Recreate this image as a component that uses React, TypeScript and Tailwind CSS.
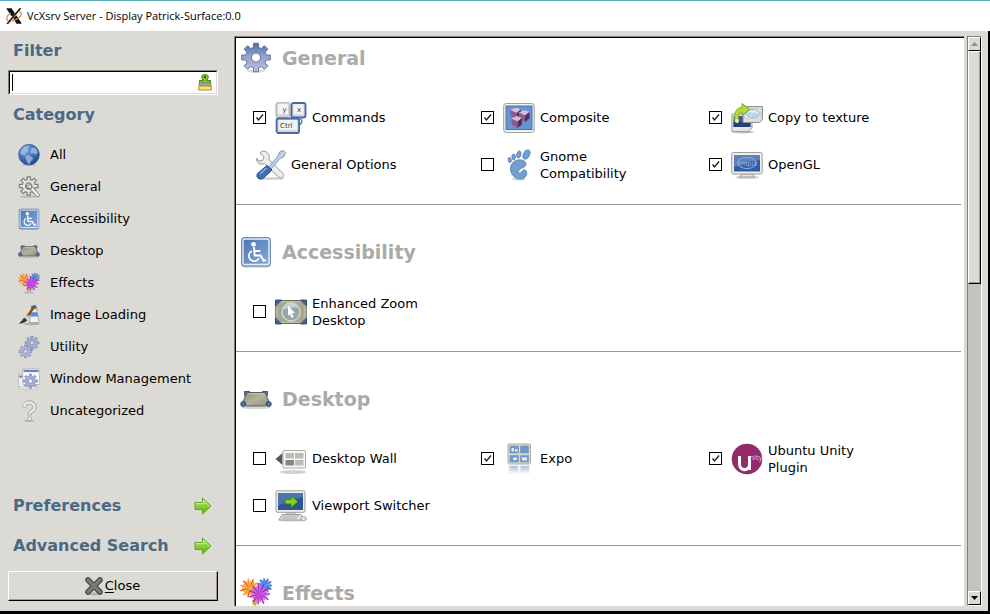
import { useState, type ReactNode } from "react";

type IconProps = { className?: string };

function Svg({ className, children }: { className?: string; children: ReactNode }) {
  return (
    <svg viewBox="0 0 32 32" className={className} aria-hidden="true" fill="none">
      {children}
    </svg>
  );
}

function gearPath(cx: number, cy: number, outer: number, inner: number, hole: number) {
  const points: string[] = [];
  for (let i = 0; i < 8; i++) {
    const a = (i * Math.PI) / 4 - Math.PI / 2;
    const corners: [number, number][] = [
      [inner, -0.24],
      [outer, -0.17],
      [outer, 0.17],
      [inner, 0.24],
    ];
    for (const [r, d] of corners) {
      points.push(`${(cx + r * Math.cos(a + d)).toFixed(2)} ${(cy + r * Math.sin(a + d)).toFixed(2)}`);
    }
  }
  return `M${points.join("L")}ZM${cx + hole} ${cy}A${hole} ${hole} 0 1 0 ${cx - hole} ${cy}A${hole} ${hole} 0 1 0 ${cx + hole} ${cy}Z`;
}

function Shadow({ y = 30, rx = 11 }: { y?: number; rx?: number }) {
  return <ellipse cx="16" cy={y} rx={rx} ry="1.6" fill="#000" opacity="0.16" />;
}

function GearIcon({ className }: IconProps) {
  return (
    <Svg className={className}>
      <defs>
        <linearGradient id="gear" x1="16" y1="1" x2="16" y2="31" gradientUnits="userSpaceOnUse">
          <stop offset="0" stopColor="#4a6aa3" />
          <stop offset="0.4" stopColor="#8d9fca" />
          <stop offset="1" stopColor="#cbbfe2" />
        </linearGradient>
      </defs>
      <Shadow y={29} rx={9} />
      <path d={gearPath(16, 15.5, 14.5, 10.5, 4.5)} fill="url(#gear)" stroke="#6273a0" strokeWidth="1" strokeLinejoin="round" fillRule="evenodd" />
    </Svg>
  );
}

function UtilityIcon({ className }: IconProps) {
  return (
    <Svg className={className}>
      <path d={gearPath(20.5, 10, 10, 7, 3)} fill="#a3b0d3" stroke="#7182ac" fillRule="evenodd" />
      <path d={gearPath(11, 22.5, 9.5, 6.8, 3)} fill="#b3b4da" stroke="#7a86b4" fillRule="evenodd" />
    </Svg>
  );
}

function GeneralOutlineIcon({ className }: IconProps) {
  return (
    <Svg className={className}>
      <Shadow y={30} rx={13} />
      <path d={gearPath(15.5, 14.5, 13.6, 9.6, 4.4)} fill="#e6e6e1" stroke="#7d7f78" strokeWidth="1.8" fillRule="evenodd" />
      <path d="M17 15l12 13" stroke="#85877f" strokeWidth="5.5" strokeLinecap="round" />
      <path d="M17 15l12 13" stroke="#f6f6f4" strokeWidth="3.2" strokeLinecap="round" />
      <path d="M13 12.5a4 4 0 1 0 6 0" stroke="#85877f" strokeWidth="2" />
    </Svg>
  );
}

function GlobeIcon({ className }: IconProps) {
  return (
    <Svg className={className}>
      <defs>
        <radialGradient id="globe" cx="0.35" cy="0.25" r="0.85">
          <stop offset="0" stopColor="#7aa5dc" />
          <stop offset="0.6" stopColor="#3868ad" />
          <stop offset="1" stopColor="#1d3f7a" />
        </radialGradient>
      </defs>
      <Shadow y={30} rx={10} />
      <circle cx="16" cy="15.5" r="15" fill="url(#globe)" stroke="#2b528e" />
      <path d="M5 8l4-4 6-2 1 3-3 2 2 3-4 3-1 4-3-1-4-2zM12 16l6 1 4 4-3 4-3 5-3-4-2-6zM20 5l6 1 3 6-3 4-4-3-4 1 1-5z" fill="#a5c2e6" opacity="0.75" />
    </Svg>
  );
}

function AccessIcon({ className }: IconProps) {
  return (
    <Svg className={className}>
      <defs>
        <linearGradient id="access" x1="0" y1="0" x2="1" y2="1">
          <stop offset="0" stopColor="#4773ae" />
          <stop offset="1" stopColor="#8cadd6" />
        </linearGradient>
      </defs>
      <rect x="1.5" y="2" width="29" height="29.5" rx="3" fill="#000" opacity="0.25" />
      <rect x="1.5" y="1.5" width="29" height="28.5" rx="3" fill="url(#access)" stroke="#6c8cb8" />
      <rect x="3" y="3" width="26" height="25.5" rx="2" stroke="#e9f0f8" strokeWidth="1.4" />
      <circle cx="13.5" cy="8.3" r="2.4" fill="#fff" />
      <path d="M14 11l.6 8.5h6l3 5.3 2.4-1M14.3 15h6" stroke="#fff" strokeWidth="2" />
      <path d="M12 15a5.3 5.3 0 1 0 7 7" stroke="#fff" strokeWidth="1.7" />
    </Svg>
  );
}

function DesktopIcon({ className }: IconProps) {
  return (
    <Svg className={className}>
      <defs>
        <linearGradient id="desk" x1="0" y1="0" x2="1" y2="1">
          <stop offset="0" stopColor="#8f917d" />
          <stop offset="0.5" stopColor="#b2b39d" />
          <stop offset="1" stopColor="#8f907c" />
        </linearGradient>
      </defs>
      <Shadow y={24.5} rx={15} />
      <g fill="#5370a6" stroke="#2b3d66" strokeWidth="0.8">
        <path d="M4.5 8.500h5v4h-5zM22.500 8.500h5v4h-5z" />
      </g>
      <path d="M8 9.500h16l2 2 3 7.500-3 4H6l-3-4L6 11.500z" fill="url(#desk)" stroke="#5c5e4f" />
      <path d="M8.500 10.700h15l1.500 1.500" stroke="#c9cab7" />
      <g fill="#5370a6" stroke="#2b3d66" strokeWidth="0.8">
        <circle cx="3.300" cy="21" r="2.600" />
        <circle cx="28.700" cy="21" r="2.600" />
      </g>
    </Svg>
  );
}

const bursts = [
  { x: 9.500, y: 11, r: 9.500, colors: ["#f59a1c", "#fcbf4d", "#e8543e", "#f8a632"] },
  { x: 25, y: 8.500, r: 7.500, colors: ["#3f7fd4", "#63a9e8", "#4a5fc4", "#7f8ee0"] },
  { x: 19.500, y: 17, r: 10.500, colors: ["#a626e0", "#e05af0", "#7c3fd6", "#e668c4"] },
];

function FireworksIcon({ className }: IconProps) {
  return (
    <Svg className={className}>
      <Shadow y={30} rx={7} />
      <path d="M14 28l3-8" stroke="#e0a520" strokeWidth="4" />
      {bursts.map((b, n) => (
        <g key={n}>
          <circle cx={b.x} cy={b.y} r={b.r * 0.55} fill={b.colors[0]} opacity="0.55" />
          {Array.from({ length: 22 }, (_, i) => {
            const a = (i * Math.PI) / 11;
            const r = i % 2 ? b.r * 0.8 : b.r;
            return (
              <path
                key={i}
                d={`M${b.x} ${b.y}L${(b.x + r * Math.cos(a)).toFixed(1)} ${(b.y + r * Math.sin(a)).toFixed(1)}`}
                stroke={b.colors[i % 4]}
                strokeWidth="1.5"
              />
            );
          })}
        </g>
      ))}
    </Svg>
  );
}

function ImageLoadingIcon({ className }: IconProps) {
  return (
    <Svg className={className}>
      <ellipse cx="20" cy="29" rx="12" ry="2" fill="#000" opacity="0.2" />
      <path d="M20 3h6l1 4h-8z" fill="#4d7dbd" stroke="#355f9b" />
      <path d="M19 7h8l3.500 20H17z" fill="#eef1f5" stroke="#8a93a0" />
      <path d="M18.500 12h9.500l1 6H18z" fill="#5f8fca" />
      <path d="M25 2L13 19" stroke="#8d5014" strokeWidth="3.500" />
      <path d="M15 17l-4 5" stroke="#c9c9c9" strokeWidth="4" />
      <path d="M9 20l4.500 3.500C11 27 6 28.500 1 28.500 5 26 6 23 9 20z" fill="#343630" />
    </Svg>
  );
}

function WindowManagementIcon({ className }: IconProps) {
  return (
    <Svg className={className}>
      <path d="M1 9h13v21H1z" fill="#f3f3f1" stroke="#aaaca6" />
      <path d="M2 11h5v3H2z" fill="#5b83bd" />
      <path d="M7 1h24v23H7z" fill="#fff" stroke="#aaaca6" />
      <path d="M8 2.500h22v3.500H8z" fill="#6289c2" />
      <path d="M1 27h27v4H1z" fill="#e4e5e4" stroke="#b5b7b1" strokeWidth="0.7" />
      <path d={gearPath(18, 19, 10.500, 7.300, 3)} fill="#a5afd6" stroke="#7683ae" fillRule="evenodd" />
    </Svg>
  );
}

function QuestionIcon({ className }: IconProps) {
  return (
    <Svg className={className}>
      <Shadow y={30.500} rx={7} />
      <path d="M9 11c0-10 15-10 15 0 0 5-7 5-7 11" stroke="#a3a49f" strokeWidth="6" />
      <path d="M9 10c0-8.500 15-8.500 15 1 0 5-7 5-7 10" stroke="#e9e9e6" strokeWidth="3.600" />
      <circle cx="16.800" cy="27" r="2.800" fill="#e9e9e6" stroke="#a3a49f" strokeWidth="1.200" />
    </Svg>
  );
}

function CommandsIcon({ className }: IconProps) {
  return (
    <Svg className={className}>
      <path d="M25 17c3 0 3 6-3 6" stroke="#4369a6" strokeWidth="1.200" />
      <rect x="1" y="0.800" width="14" height="14.500" rx="1.500" fill="#d6d7d3" stroke="#a2a49f" />
      <rect x="3" y="1.800" width="10" height="10.500" rx="1" fill="#f3f3f1" />
      <rect x="16.500" y="1" width="14" height="14.500" rx="2" fill="#d6d7d3" stroke="#4369a6" strokeWidth="1.800" />
      <rect x="18.500" y="2.300" width="10" height="10" rx="1" fill="#f3f3f1" />
      <rect x="1.600" y="16.500" width="22.500" height="14.500" rx="2" fill="#d6d7d3" stroke="#4369a6" strokeWidth="1.800" />
      <rect x="4" y="18" width="18" height="10" rx="1" fill="#f3f3f1" />
      <g fill="#3a3c38" fontFamily="DejaVu Sans, sans-serif" fontSize="7">
        <text x="7.500" y="9.500">y</text>
        <text x="22" y="9.500">x</text>
        <text x="5" y="26.300">Ctrl</text>
      </g>
    </Svg>
  );
}

function ToolsIcon({ className }: IconProps) {
  return (
    <Svg className={className}>
      <Shadow y={29.500} rx={13} />
      <path d="M5 4l4 4-1.500 3.500L4 12 1.500 9C1 14 6 16.500 9.500 14.500L24 28.500c3 2 6-1.500 4-4L14 10.500C15.500 6 12 1.500 7 2.200z" fill="#ececeb" stroke="#93958f" />
      <path d="M14 18L23 7l1.500-4L28.500 1.500l2 2-1.500 4L25 9.500 16 20z" fill="#c3d1e6" stroke="#8294b1" />
      <path d="M12 16.500l5 4.500-9 8.500c-4 2-7.500-1.500-5.500-5z" fill="#3e70b8" stroke="#244c88" />
      <path d="M11.500 19L5 25" stroke="#8fb2e0" strokeWidth="1.600" />
    </Svg>
  );
}

function Cube({ x, y }: { x: number; y: number }) {
  return (
    <g transform={`translate(${x} ${y})`}>
      <path d="M0 2.500L6 0l5 2-4.500 3.500z" fill="#d9bcd6" />
      <path d="M0 2.500l6.500 3V12L1 9z" fill="#8f5a8f" />
      <path d="M11 2L6.500 5.500V12L11 8.500z" fill="#5b2c5c" />
    </g>
  );
}

function CompositeIcon({ className }: IconProps) {
  return (
    <Svg className={className}>
      <rect x="0.700" y="1.500" width="30.500" height="29" rx="2.500" fill="#f2f2f0" stroke="#9fa19b" />
      <rect x="3" y="4" width="26" height="23.500" fill="#6696cf" stroke="#4674ae" />
      <Cube x={7} y={5.500} />
      <Cube x={15.500} y={8} />
      <Cube x={8} y={14} />
    </Svg>
  );
}

function FootIcon({ className }: IconProps) {
  return (
    <Svg className={className}>
      <Shadow y={30} rx={7} />
      <g fill="#729fd0" stroke="#5684ba" strokeWidth="0.900">
        <ellipse cx="23.500" cy="5.500" rx="3" ry="4.800" transform="rotate(28 23.500 5.500)" />
        <ellipse cx="15.800" cy="5.500" rx="2" ry="3.600" transform="rotate(12 15.800 5.500)" />
        <ellipse cx="10.600" cy="8" rx="1.700" ry="3" />
        <ellipse cx="6.700" cy="11" rx="1.500" ry="2.600" transform="rotate(-15 6.700 11)" />
        <path d="M22 12.500c-6-4-15-.5-14.500 8 .5 6.500 6 10 10.500 9.500 5-.5 7-6 5-8.500-2-2-4 .5-5.500 2.500-1 1-3-1-1.500-3 2-2.500 6-2 6.800-5 .3-1.500 0-2.700-.8-3.500z" />
      </g>
    </Svg>
  );
}

function CopyTextureIcon({ className }: IconProps) {
  return (
    <Svg className={className}>
      <ellipse cx="12" cy="30" rx="11" ry="1.500" fill="#000" opacity="0.25" />
      <path d="M.8 12H21v14l-4 3.500H.8z" fill="#e5e6e4" stroke="#9fa19b" />
      <path d="M2.500 14h17v11h-17z" fill="#315c9f" />
      <path d="M2.500 20c6-1 11 0 17-2v7h-17z" fill="#24427a" />
      <path d="M12 4.500h19.500v13l-3 3H12z" fill="#dededb" stroke="#8f918b" />
      <path d="M13.800 6.300h16v10h-16z" fill="#e3ebf4" stroke="#b9c2cc" strokeWidth="0.600" />
      <ellipse cx="22" cy="11.500" rx="7" ry="4" stroke="#8fb4dc" />
      <text x="16" y="14" fill="#82a9d5" fontFamily="DejaVu Sans, sans-serif" fontSize="6">mpi</text>
      <path d="M4 19C2.500 10 6 5.500 11 5.500V1.500l8 6-8 6V10c-3 0-4 3-3.500 9z" fill="#b6d83c" stroke="#7fa31b" />
      <circle cx="6" cy="19" r="2" fill="#e9f2c0" />
    </Svg>
  );
}

function OpenGLIcon({ className }: IconProps) {
  return (
    <Svg className={className}>
      <Shadow y={28.500} rx={12} />
      <path d="M11 25h10l3 3H8z" fill="#e8e8e6" stroke="#9b9d97" />
      <rect x="0.700" y="3.500" width="30.500" height="21.500" rx="1.800" fill="#eeeeec" stroke="#9b9d97" />
      <rect x="3" y="6" width="26" height="16.500" fill="#2f5da5" />
      <path d="M3 6h26v5C20 12 14 14 3 18z" fill="#6d93c8" opacity="0.700" />
      <ellipse cx="16" cy="14" rx="9.500" ry="5.500" stroke="#8fb1dc" />
      <text x="7.500" y="16.500" fill="#9dbce3" fontFamily="DejaVu Sans, sans-serif" fontSize="6.500">(mpiz</text>
    </Svg>
  );
}

function ZoomDesktopIcon({ className }: IconProps) {
  return (
    <Svg className={className}>
      <rect x="0.700" y="4.500" width="30.600" height="23" rx="1" fill="#a6a78f" stroke="#6c6e5c" />
      <rect x="2" y="5.700" width="28" height="20.600" stroke="#c1c2ad" />
      <g fill="#4467a0" stroke="#263d68" strokeWidth="0.800">
        <path d="M.5 4h6l-6 6zM31.500 4h-6l6 6zM.5 28v-6l6 6zM31.500 28v-6l-6 6z" />
      </g>
      <circle cx="16" cy="16" r="9" fill="#94a5a5" stroke="#d3dada" strokeWidth="1.300" />
      <path d="M8 14a8 8 0 0 1 15-2c-5-1-10 0-15 2z" fill="#c6d0d0" />
      <path d="M13 9.500l7 7.500-3 .3 1.700 3.700-2 1-1.700-4-2 2z" fill="#fff" />
    </Svg>
  );
}

function DesktopWallIcon({ className }: IconProps) {
  return (
    <Svg className={className}>
      <ellipse cx="18" cy="29" rx="13" ry="2" fill="#000" opacity="0.18" />
      <path d="M0.500 16l7-6v12z" fill="#555753" />
      <rect x="8" y="7.500" width="22.500" height="17.500" rx="0.800" fill="#f7f7f6" stroke="#a9aba6" />
      <path d="M10.500 10h8.500v5.500h-8.500zM20 10h8.500v5.500H20zM20 17h8.500v5.500H20z" fill="#b9bbb7" />
      <path d="M10.500 17h8.500v5.500h-8.500z" fill="#858783" />
    </Svg>
  );
}

function ExpoIcon({ className }: IconProps) {
  return (
    <Svg className={className}>
      <defs>
        <linearGradient id="mirror" x1="0" y1="0" x2="0" y2="1">
          <stop offset="0" stopColor="#a9c0dc" />
          <stop offset="1" stopColor="#fff" />
        </linearGradient>
      </defs>
      <path d="M5 22h22v9H5z" fill="#ececec" opacity="0.600" />
      <path d="M6.500 23h8.500v8H6.500zM17.500 23h8.500v8h-8.500z" fill="url(#mirror)" />
      <rect x="5" y="1" width="22.500" height="20" rx="1" fill="#d5d7d3" stroke="#acaea9" />
      <path d="M7 3h8.500v7H7zM17.500 3h8v7h-8zM7 12.500h8.500v6.500H7zM17.500 12.500h8v6.500h-8z" fill="#6a99cf" stroke="#8a98aa" strokeWidth="0.700" />
      <path d="M8.500 5h2.500v3.500H8.500zM12 6h2.500v2.500H12zM10 14.500h4v2.500h-4zM19 14.300h5v3.200h-5z" fill="#e8ebee" />
    </Svg>
  );
}

function UnityIcon({ className }: IconProps) {
  return (
    <Svg className={className}>
      <circle cx="16" cy="16" r="15.300" fill="#952a6b" />
      <path d="M8.500 13v8c0 7.500 10 7.500 10 0v-8M18.500 13v14" stroke="#fff" strokeWidth="3" />
      <text x="18.500" y="16.500" fill="#e6c5da" fontFamily="Open Sans, sans-serif" fontSize="7.500">nity</text>
    </Svg>
  );
}

function ViewportIcon({ className }: IconProps) {
  return (
    <Svg className={className}>
      <ellipse cx="17" cy="30" rx="14" ry="1.600" fill="#000" opacity="0.180" />
      <path d="M11 22h10v3H11z" fill="#c9cac7" />
      <rect x="1" y="0.800" width="29" height="21.500" rx="1.500" fill="#eeeeec" stroke="#9b9d97" />
      <rect x="3" y="3" width="25" height="17" fill="#2d5596" />
      <path d="M3 3h25v4C20 9 12 11 3 16z" fill="#5d82b8" opacity="0.700" />
      <path d="M10 9.500h6V6l7 5.700-7 5.700V14h-6z" fill="#82cf26" stroke="#3f8a08" />
      <path d="M7 24.500h19l3 5.500H4z" fill="#e6e7e5" stroke="#9b9d97" />
      <path d="M8 26.200h16M7 28.200h15" stroke="#a6a8a4" />
      <ellipse cx="28.500" cy="28.500" rx="2.800" ry="2" fill="#e6e7e5" stroke="#9b9d97" />
    </Svg>
  );
}

function ArrowIcon() {
  return (
    <svg viewBox="0 0 18 18" className="h-[18px] w-[18px]" fill="none" aria-hidden="true">
      <defs>
        <linearGradient id="arrow" x1="0" y1="0" x2="0" y2="1">
          <stop offset="0" stopColor="#b4e86a" />
          <stop offset="1" stopColor="#5db40f" />
        </linearGradient>
      </defs>
      <path d="M1 5.500h7.500V1l8.500 8-8.500 8v-4.500H1z" fill="url(#arrow)" stroke="#5fa526" strokeLinejoin="round" />
      <path d="M2.200 6.700h7.300V3.500L15.300 9" stroke="#d2f3a0" />
    </svg>
  );
}

function BrushIcon() {
  return (
    <svg viewBox="0 0 14 17" className="h-[17px] w-[14px]" fill="none" aria-hidden="true">
      <path d="M5 6.500L4 4.500C3 1 5 .5 7 .5S11 1 10 4.500L9 6.500h3.500V9.500h-11V6.500z" fill="#83bd2d" stroke="#4e8a0c" />
      <circle cx="7" cy="3" r="1.200" fill="#33600a" />
      <path d="M1 8.800h12v3H1z" fill="#a5a8a1" stroke="#777a74" strokeWidth="0.800" />
      <path d="M1 12h12l.5 4H.5z" fill="#efe28c" stroke="#b88a16" />
    </svg>
  );
}

function XLogo() {
  return (
    <svg viewBox="0 0 16 16" className="h-4 w-4" fill="none" aria-hidden="true">
      <path d="M0.500 0.500h5L15.500 15.500h-5z" fill="#111" />
      <path d="M14.500 0.500L1 15.500" stroke="#fff" strokeWidth="3" />
      <path d="M15 0.500h-1.500L.8 15.500h1.500z" fill="#111" stroke="#111" strokeWidth="0.600" />
      <path d="M0.500 0.500h5L9 5.500 6 8.500zM8 10l2.500-2.500 5 8h-5z" fill="#111" />
      <path d="M4.500 5C.5 7.500-.5 12 2.500 13M6 13c5-1 9.500-4.500 9.300-7.500C15 4 13.500 3.700 12.500 4" stroke="#ee7f45" strokeWidth="1.300" />
    </svg>
  );
}

function CloseIcon() {
  return (
    <svg viewBox="0 0 20 20" className="h-5 w-5" fill="none" aria-hidden="true">
      <ellipse cx="10" cy="18" rx="8" ry="1.500" fill="#000" opacity="0.180" />
      <path d="M4 4l12 12M16 4L4 16" stroke="#3b3d39" strokeWidth="5.500" strokeLinecap="round" />
      <path d="M4 4l12 12M16 4L4 16" stroke="#777a74" strokeWidth="3.600" strokeLinecap="round" />
    </svg>
  );
}

type IconType = (props: IconProps) => ReactNode;

const categories: { name: string; Icon: IconType }[] = [
  { name: "All", Icon: GlobeIcon },
  { name: "General", Icon: GeneralOutlineIcon },
  { name: "Accessibility", Icon: AccessIcon },
  { name: "Desktop", Icon: DesktopIcon },
  { name: "Effects", Icon: FireworksIcon },
  { name: "Image Loading", Icon: ImageLoadingIcon },
  { name: "Utility", Icon: UtilityIcon },
  { name: "Window Management", Icon: WindowManagementIcon },
  { name: "Uncategorized", Icon: QuestionIcon },
];

type Plugin = { name: string; Icon: IconType; enabled?: boolean };

const sections: { name: string; Icon: IconType; plugins: Plugin[] }[] = [
  {
    name: "General",
    Icon: GearIcon,
    plugins: [
      { name: "Commands", Icon: CommandsIcon, enabled: true },
      { name: "Composite", Icon: CompositeIcon, enabled: true },
      { name: "Copy to texture", Icon: CopyTextureIcon, enabled: true },
      { name: "General Options", Icon: ToolsIcon },
      { name: "Gnome Compatibility", Icon: FootIcon, enabled: false },
      { name: "OpenGL", Icon: OpenGLIcon, enabled: true },
    ],
  },
  {
    name: "Accessibility",
    Icon: AccessIcon,
    plugins: [{ name: "Enhanced Zoom Desktop", Icon: ZoomDesktopIcon, enabled: false }],
  },
  {
    name: "Desktop",
    Icon: DesktopIcon,
    plugins: [
      { name: "Desktop Wall", Icon: DesktopWallIcon, enabled: false },
      { name: "Expo", Icon: ExpoIcon, enabled: true },
      { name: "Ubuntu Unity Plugin", Icon: UnityIcon, enabled: true },
      { name: "Viewport Switcher", Icon: ViewportIcon, enabled: false },
    ],
  },
  { name: "Effects", Icon: FireworksIcon, plugins: [] },
];

function PluginEntry({ plugin }: { plugin: Plugin }) {
  const { name, Icon, enabled } = plugin;
  const [checked, setChecked] = useState(enabled ?? false);

  if (enabled === undefined) {
    return (
      <button type="button" className="flex h-[47px] items-center gap-1 pl-0.5 text-left">
        <Icon className="h-8 w-8 shrink-0" />
        {name}
      </button>
    );
  }
  return (
    <label className="flex h-[47px] items-center">
      <span className="mr-[9px] grid shrink-0">
        <input
          type="checkbox"
          checked={checked}
          onChange={() => setChecked(!checked)}
          className="peer h-[13px] w-[13px] appearance-none border border-black bg-white [grid-area:1/1]"
        />
        <svg
          viewBox="0 0 13 13"
          fill="none"
          aria-hidden="true"
          className="pointer-events-none invisible h-[13px] w-[13px] [grid-area:1/1] peer-checked:visible"
        >
          <path d="M3.500 6.500l2 2.500 4.500-5.500" stroke="#222" strokeWidth="1.400" />
        </svg>
      </span>
      <Icon className="mr-[5px] h-8 w-8 shrink-0" />
      <span className="w-[120px] leading-[17px]">{name}</span>
    </label>
  );
}

function ScrollButton({ label, up }: { label: string; up?: boolean }) {
  return (
    <button
      type="button"
      aria-label={label}
      className="flex h-[14px] shrink-0 items-center justify-center border border-t-white border-r-black border-b-black border-l-white bg-[#dcdad5]"
    >
      <svg viewBox="0 0 7 4" className="h-1 w-[7px]" aria-hidden="true">
        {up ? <path d="M3.500 0L7 4H0z" fill="#918e87" /> : <path d="M0 0h7L3.500 4z" fill="#000" />}
      </svg>
    </button>
  );
}

export default function App() {
  const [filter, setFilter] = useState("");

  return (
    <div className="flex h-screen flex-col overflow-hidden border-t border-t-[#58adb6] bg-white font-['DejaVu_Sans',sans-serif] text-[13px] text-black">
      <header className="flex h-[30px] shrink-0 items-center gap-[5px] pl-1.5 font-['Open_Sans',sans-serif] text-[11px]">
        <XLogo />
        <h1>VcXsrv Server - Display Patrick-Surface:0.0</h1>
      </header>

      <div className="flex min-h-0 flex-1 border-r-2 border-b-3 border-black bg-[#dcdad5]">
        <aside className="flex w-[234px] shrink-0 flex-col pr-4 pb-2.5 pl-2">
          <label htmlFor="filter" className="flex h-[39px] items-center pl-[5px] text-[16px] font-bold text-[#4b6983]">
            Filter
          </label>
          <div className="flex h-[25px] shrink-0 items-center border border-t-[#82807b] border-r-white border-b-white border-l-[#82807b]">
            <div className="flex h-full w-full items-center border border-t-black border-r-[#dcdad5] border-b-[#dcdad5] border-l-black bg-white pr-1 pl-0.5">
              <span className="h-[17px] w-px bg-black" />
              <input
                id="filter"
                type="text"
                value={filter}
                onChange={(e) => setFilter(e.target.value)}
                className="min-w-0 flex-1 px-1 outline-none"
              />
              <BrushIcon />
            </div>
          </div>
          <h2 className="flex h-[39px] items-center pl-[5px] text-[16px] font-bold text-[#4b6983]">Category</h2>
          <nav className="mt-[5px] flex flex-col">
            {categories.map(({ name, Icon }) => (
              <button key={name} type="button" className="flex h-8 items-center gap-2.5 pl-2.5 text-left">
                <Icon className="h-[22px] w-[22px]" />
                {name}
              </button>
            ))}
          </nav>
          <div className="mt-auto flex flex-col">
            {["Preferences", "Advanced Search"].map((name) => (
              <button
                key={name}
                type="button"
                className="flex h-10 items-center justify-between pr-1.5 pl-[5px] text-[16px] font-bold text-[#4b6983]"
              >
                {name}
                <ArrowIcon />
              </button>
            ))}
            <button
              type="button"
              className="mt-[5px] flex h-[30px] items-center justify-center gap-px border border-t-white border-r-black border-b-black border-l-white pr-0.5 shadow-[inset_-1px_-1px_0_#a09c94]"
            >
              <CloseIcon />
              <span>
                <span className="underline underline-offset-2">C</span>lose
              </span>
            </button>
          </div>
        </aside>

        <main className="my-[5px] min-w-0 flex-1 overflow-hidden border-t border-l border-[#82807b]">
          <div className="h-full overflow-hidden border-t border-l border-black bg-white pr-[3px]">
            {sections.map(({ name, Icon, plugins }) => (
              <section key={name} className="border-b border-[#9a968c] pt-[31px] pb-4 first:pt-1">
                <h2 className="flex h-8 items-center gap-2.5 pl-1 text-[19px] font-bold text-[#aaaaaa]">
                  <Icon className="h-8 w-8" />
                  {name}
                </h2>
                <div className="mt-5 grid grid-cols-3 pr-6 pl-[17px]">
                  {plugins.map((plugin) => (
                    <PluginEntry key={plugin.name} plugin={plugin} />
                  ))}
                </div>
              </section>
            ))}
          </div>
        </main>

        <div
          role="group"
          aria-label="Scroll plugins"
          className="my-[5px] mr-1.5 ml-[3px] flex w-[15px] shrink-0 flex-col border border-t-[#82807b] border-r-white border-b-white border-l-[#82807b] bg-[#c4c2bd]"
        >
          <ScrollButton label="Scroll up" up />
          <div className="flex-3 border border-t-white border-r-black border-b-black border-l-white bg-[#dcdad5] shadow-[inset_-1px_-1px_0_#a09c94]" />
          <div className="flex-4" />
          <ScrollButton label="Scroll down" />
        </div>
      </div>
    </div>
  );
}
